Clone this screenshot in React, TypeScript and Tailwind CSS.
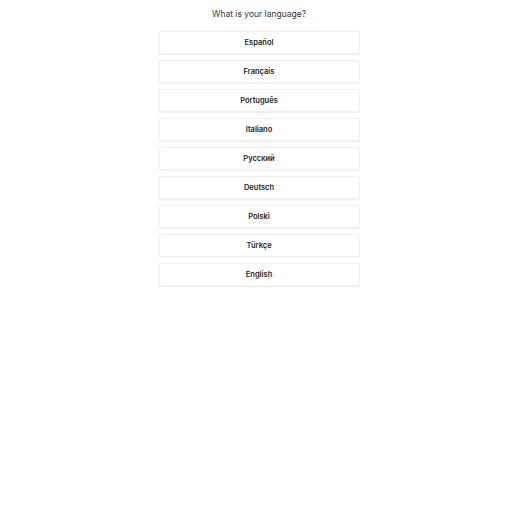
const languages = ['Español', 'Français', 'Português', 'Italiano', 'Русский', 'Deutsch', 'Polski', 'Türkçe', 'English'];

export default function App() {
  return (
    <div className="min-h-screen bg-white pl-[6px] pt-[8px]" style={{ fontFamily: 'Inter, "Noto Sans", sans-serif' }}>
      <div className="mx-auto flex w-[201px] flex-col items-center">
        <h1 className="text-[8.5px] leading-[13px] text-[#333]">What is your language?</h1>
        <div className="mt-[10px] flex w-full flex-col gap-[6px]">
          {languages.map((lang) => (
            <button
              key={lang}
              className="h-[23px] w-full rounded-[2px] border border-[#efefef] bg-white text-[7.5px] font-semibold text-[#222] shadow-[0_1px_2px_rgba(0,0,0,0.07)]"
            >
              {lang}
            </button>
          ))}
        </div>
      </div>
    </div>
  );
}
